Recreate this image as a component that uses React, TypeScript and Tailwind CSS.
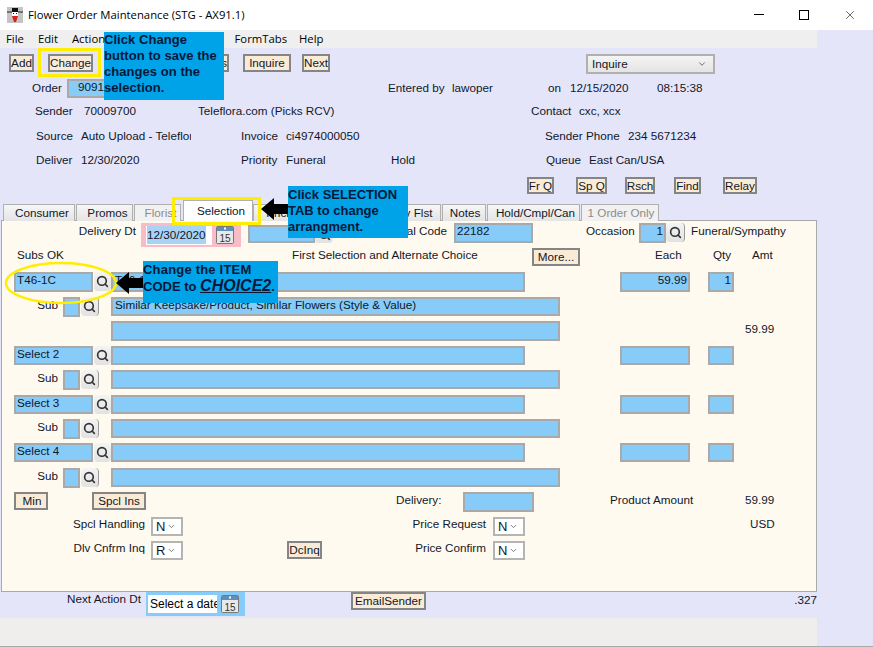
import { ReactNode } from "react";
import { ChevronDown, Search, X } from "lucide-react";

const Field = ({ className = "", children }: { className?: string; children?: ReactNode }) => (
  <div
    className={`shrink-0 overflow-hidden whitespace-nowrap border-2 border-[#a9a9a9] bg-[#87cbf9] px-px leading-[11px] ${className}`}
  >
    {children}
  </div>
);

const Btn = ({ className = "", children }: { className?: string; children: ReactNode }) => (
  <div
    className={`flex shrink-0 items-center justify-center whitespace-nowrap border-2 border-[#858585] bg-[#faebd7] leading-none ${className}`}
  >
    {children}
  </div>
);

const Lens = ({ className = "" }: { className?: string }) => (
  <div
    className={`flex shrink-0 items-center justify-center rounded-sm bg-gradient-to-b from-[#f4f4f4] to-[#e2e2e2] text-[#333] ${className}`}
  >
    <Search size={13} strokeWidth={3} />
  </div>
);

const Calendar = () => (
  <svg width="18" height="18" viewBox="0 0 18 18" className="shrink-0">
    <rect x="0.5" y="0.5" width="17" height="17" rx="1" fill="#e8e8e8" stroke="#777" />
    <rect x="1" y="1" width="16" height="4" fill="#5f8fb8" />
    <rect x="8" y="1.5" width="2" height="2" fill="#fff" />
    <text x="9" y="15.5" textAnchor="middle" fontSize="10" fill="#333" fontFamily="Liberation Sans">
      15
    </text>
  </svg>
);

const Drop = ({ children, className = "" }: { children: ReactNode; className?: string }) => (
  <div
    className={`flex h-[19px] w-[32px] shrink-0 items-center justify-between border-2 border-[#b4b4b4] bg-white pl-[3px] pr-[5px] text-[13px] ${className}`}
  >
    {children}
    <ChevronDown size={9} className="text-[#555]" />
  </div>
);

const Tab = ({ className = "", children }: { className?: string; children: ReactNode }) => (
  <div
    className={`flex h-[17px] shrink-0 items-center justify-center whitespace-nowrap border border-b-0 border-[#b0b0b0] ${className}`}
  >
    {children}
  </div>
);

const SubRow = ({ text, className }: { text?: string; className: string }) => (
  <div className={`flex items-start ${className}`}>
    <div className="w-[56px] shrink-0 text-right leading-[16px]">Sub</div>
    <Field className="ml-[5px] h-[20px] w-[17px]" />
    <Lens className="ml-px h-[19px] w-[18px] border-r border-[#999]" />
    <Field className="ml-[12px] h-[19px] w-[449px] pl-[2px]">{text}</Field>
  </div>
);

const SelectLine = ({ label, className }: { label: string; className: string }) => (
  <div className={`flex items-start ${className}`}>
    <Field className="ml-[12px] h-[19px] w-[79px]">{label}</Field>
    <Lens className="ml-px h-[19px] w-[17px]" />
    <Field className="h-[19px] w-[414px]" />
    <Field className="ml-[95px] h-[19px] w-[70px]" />
    <Field className="ml-[18px] h-[19px] w-[26px]" />
  </div>
);

export default function App() {
  return (
    <div className="relative h-[647px] w-[873px] overflow-hidden bg-[#e5e5fa] font-['Liberation_Sans',sans-serif] text-[11.7px] text-[#10182a]">
      {/* title bar */}
      <div className="flex h-[30px] items-center bg-white pl-[7px]">
        <svg width="16" height="16" viewBox="0 0 16 16" className="shrink-0">
          <rect width="16" height="16" fill="#c4c4c4" />
          <path d="M0 5h16" stroke="#222" strokeWidth="1" />
          <rect x="5" y="1" width="6" height="4" fill="#111" />
          <rect x="5" y="5" width="6" height="4" fill="#fff" />
          <rect x="6" y="6" width="1" height="1" fill="#111" />
          <rect x="9" y="6" width="1" height="1" fill="#111" />
          <path d="M5 9h6l-2 6H7z" fill="#d81e1e" />
        </svg>
        <span className="ml-[5px] font-['Open_Sans',sans-serif] text-[11.3px] text-black">
          Flower Order Maintenance (STG - AX91.1)
        </span>
        <div className="mb-[1px] ml-auto flex items-center text-black">
          <div className="h-px w-[10px] bg-black" />
          <div className="ml-[35px] h-[10px] w-[10px] border border-black" />
          <X size={14} strokeWidth={1} className="ml-[34px] mr-[16px]" />
        </div>
      </div>

      {/* menu */}
      <div className="flex h-[18px] w-[817px] items-center bg-[#efefef] pl-[6px] font-['Open_Sans',sans-serif] text-[11.3px] text-black">
        <span>File</span>
        <span className="ml-[14px]">Edit</span>
        <span className="ml-[14px]">Actions</span>
        <span className="ml-[124px]">FormTabs</span>
        <span className="ml-[12px]">Help</span>
      </div>

      <div className="w-[817px]">
        {/* toolbar */}
        <div className="flex h-[31px] items-start pt-[6px]">
          <Btn className="ml-[9px] h-[18px] w-[25px]">Add</Btn>
          <Btn className="ml-[14px] h-[18px] w-[45px]">Change</Btn>
          <Btn className="ml-[120px] h-[18px] w-[16px] justify-end">Ins</Btn>
          <Btn className="ml-[14px] h-[18px] w-[48px]">Inquire</Btn>
          <Btn className="ml-[11px] h-[18px] w-[28px]">Next</Btn>
          <div className="ml-[256px] flex h-[20px] w-[129px] shrink-0 items-center justify-between border-2 border-[#b0b0b0] bg-gradient-to-b from-[#f4f4f4] to-[#e4e4e4] pl-[4px] pr-[6px]">
            Inquire
            <ChevronDown size={10} className="text-[#555]" />
          </div>
        </div>

        {/* order header */}
        <div className="flex h-[20px] items-center pb-[3px]">
          <div className="w-[62px] text-right">Order</div>
          <Field className="ml-[5px] h-[19px] w-[60px] self-start pl-[9px]">90917000</Field>
          <div className="ml-[261px] w-[60px]">Entered by</div>
          <div className="ml-[4px] w-[96px]">lawoper</div>
          <div className="w-[22px]">on</div>
          <div className="w-[87px]">12/15/2020</div>
          <div>08:15:38</div>
        </div>
        <div className="flex h-[24px] items-center">
          <div className="ml-[35px] w-[49px]">Sender</div>
          <div className="w-[114px]">70009700</div>
          <div className="w-[333px]">Teleflora.com (Picks RCV)</div>
          <div className="w-[48px]">Contact</div>
          <div>cxc, xcx</div>
        </div>
        <div className="flex h-[25px] items-center">
          <div className="ml-[36px] w-[45px]">Source</div>
          <div className="w-[110px] overflow-hidden whitespace-nowrap">Auto Upload - Teleflora</div>
          <div className="ml-[50px] w-[45px]">Invoice</div>
          <div className="w-[259px]">ci4974000050</div>
          <div className="w-[83px]">Sender Phone</div>
          <div>234 5671234</div>
        </div>
        <div className="flex h-[24px] items-center">
          <div className="ml-[36px] w-[45px]">Deliver</div>
          <div className="w-[160px]">12/30/2020</div>
          <div className="w-[45px]">Priority</div>
          <div className="w-[105px]">Funeral</div>
          <div className="w-[155px]">Hold</div>
          <div className="w-[43px]">Queue</div>
          <div>East Can/USA</div>
        </div>

        {/* quick buttons */}
        <div className="flex h-[28px] items-start pt-[5px]">
          <Btn className="ml-[527px] h-[17px] w-[27px]">Fr Q</Btn>
          <Btn className="ml-[22px] h-[17px] w-[31px]">Sp Q</Btn>
          <Btn className="ml-[18px] h-[17px] w-[30px]">Rsch</Btn>
          <Btn className="ml-[19px] h-[17px] w-[27px]">Find</Btn>
          <Btn className="ml-[22px] h-[17px] w-[34px]">Relay</Btn>
        </div>

        {/* tabs */}
        <div className="relative z-10 flex h-[21px] items-end pl-[3px]">
          <Tab className="w-[72px] bg-gradient-to-b from-[#f6f6f6] to-[#e4e4e4] pl-[6px]">Consumer</Tab>
          <Tab className="ml-px w-[57px] bg-gradient-to-b from-[#f6f6f6] to-[#e4e4e4] pl-[6px]">Promos</Tab>
          <Tab className="ml-px w-[47px] bg-[#f1f1f1] pl-[6px] text-[#8c8c8c]">Florist</Tab>
          <div className="ml-[2px] flex h-[21px] w-[70px] items-center justify-center border border-b-0 border-[#b0b0b0] bg-white pl-[6px]">
            Selection
          </div>
          <Tab className="w-[62px] bg-gradient-to-b from-[#f6f6f6] to-[#e4e4e4]">Pricing</Tab>
          <Tab className="w-[70px] bg-gradient-to-b from-[#f6f6f6] to-[#e4e4e4]">Codes</Tab>
          <Tab className="w-[56px] bg-gradient-to-b from-[#f6f6f6] to-[#e4e4e4]">Dlv Flst</Tab>
          <Tab className="ml-px w-[44px] bg-gradient-to-b from-[#f6f6f6] to-[#e4e4e4] pl-[2px]">Notes</Tab>
          <Tab className="ml-px w-[93px] bg-gradient-to-b from-[#f6f6f6] to-[#e4e4e4] pl-[4px]">Hold/Cmpl/Can</Tab>
          <Tab className="ml-px w-[78px] bg-[#f1f1f1] pl-[2px] text-[#8c8c8c]">1 Order Only</Tab>
        </div>

        {/* selection panel */}
        <div className="ml-px -mt-px h-[372px] w-[816px] border border-[#a9a9a9] bg-[#fffaf0] pt-[2px]">
          <div className="flex h-[25px] items-start">
            <div className="mt-px w-[134px] shrink-0 text-right leading-[14px]">Delivery Dt</div>
            <div className="ml-[5px] flex h-[24px] w-[100px] shrink-0 items-center bg-[#f7bcc7] pl-[5px]">
              <div className="flex h-[19px] w-[66px] items-center bg-white pl-[1px]">
                <span className="bg-[#a9d3f5]">12/30/2020</span>
              </div>
              <div className="ml-[4px]">
                <Calendar />
              </div>
            </div>
            <Field className="ml-[7px] mt-[2px] h-[18px] w-[67px]" />
            <Lens className="mt-[2px] h-[18px] w-[18px]" />
            <div className="mt-px w-[114px] shrink-0 text-right leading-[14px]">Postal Code</div>
            <Field className="ml-[7px] h-[20px] w-[79px]">22182</Field>
            <div className="ml-[53px] mt-px w-[47px] shrink-0 whitespace-nowrap leading-[14px]">Occasion</div>
            <Field className="ml-[6px] h-[20px] w-[27px] text-right">1</Field>
            <Lens className="h-[19px] w-[19px] border-r border-[#999]" />
            <div className="ml-[6px] mt-px leading-[14px]">Funeral/Sympathy</div>
          </div>

          <div className="flex h-[24px] items-start">
            <div className="ml-[15px] w-[275px] shrink-0 leading-[14px]">Subs OK</div>
            <div className="w-[240px] shrink-0 leading-[14px]">First Selection and Alternate Choice</div>
            <Btn className="h-[18px] w-[48px]">More...</Btn>
            <div className="ml-[75px] w-[58px] shrink-0 leading-[14px]">Each</div>
            <div className="w-[39px] shrink-0 leading-[14px]">Qty</div>
            <div className="leading-[14px]">Amt</div>
          </div>

          <div className="flex h-[25px] items-start">
            <Field className="ml-[12px] h-[20px] w-[79px]">T46-1C</Field>
            <Lens className="ml-px h-[19px] w-[17px]" />
            <Field className="h-[20px] w-[414px] pl-[2px]">T46-1C Florist Choice</Field>
            <Field className="ml-[95px] h-[20px] w-[70px] text-right">59.99</Field>
            <Field className="ml-[18px] h-[20px] w-[26px] text-right">1</Field>
          </div>
          <SubRow className="h-[24px]" text="Similar Keepsake/Product, Similar Flowers (Style & Value)" />
          <div className="flex h-[25px] items-start">
            <Field className="ml-[109px] h-[20px] w-[449px]" />
            <div className="ml-[185px] mt-px leading-[14px]">59.99</div>
          </div>

          <SelectLine className="h-[24px]" label="Select 2" />
          <SubRow className="h-[25px]" />
          <SelectLine className="h-[24px]" label="Select 3" />
          <SubRow className="h-[24px]" />
          <SelectLine className="h-[25px]" label="Select 4" />
          <SubRow className="h-[24px]" />

          <div className="flex h-[25px] items-start">
            <Btn className="ml-[12px] h-[18px] w-[34px] pl-[2px]">Min</Btn>
            <Btn className="ml-[44px] h-[18px] w-[54px]">Spcl Ins</Btn>
            <div className="ml-[250px] mt-[1px] w-[67px] shrink-0 leading-[14px]">Delivery:</div>
            <Field className="h-[20px] w-[71px]" />
            <div className="ml-[76px] mt-[1px] w-[135px] shrink-0 leading-[14px]">Product Amount</div>
            <div className="mt-[1px] leading-[14px]">59.99</div>
          </div>
          <div className="flex h-[24px] items-start">
            <div className="w-[143px] shrink-0 text-right leading-[14px]">Spcl Handling</div>
            <Drop className="ml-[6px]">N</Drop>
            <div className="w-[303px] shrink-0 text-right leading-[14px]">Price Request</div>
            <Drop className="ml-[7px]">N</Drop>
            <div className="ml-[225px] leading-[14px]">USD</div>
          </div>
          <div className="flex h-[24px] items-start">
            <div className="w-[143px] shrink-0 text-right leading-[14px]">Dlv Cnfrm Inq</div>
            <Drop className="ml-[6px]">R</Drop>
            <Btn className="ml-[104px] h-[18px] w-[35px]">DcInq</Btn>
            <div className="w-[164px] shrink-0 text-right leading-[14px]">Price Confirm</div>
            <Drop className="ml-[7px]">N</Drop>
          </div>
        </div>

        {/* next action */}
        <div className="flex h-[26px] items-start">
          <div className="ml-[67px] w-[79px] shrink-0 whitespace-nowrap leading-[14px]">Next Action Dt</div>
          <div className="flex h-[24px] w-[99px] shrink-0 items-center bg-[#87cbf9] pl-[2px]">
            <div className="flex h-[18px] w-[69px] items-center overflow-hidden whitespace-nowrap bg-white pl-[2px] text-[12px] text-black">
              Select a date
            </div>
            <div className="ml-[4px]">
              <Calendar />
            </div>
          </div>
          <Btn className="ml-[106px] h-[18px] w-[75px]">EmailSender</Btn>
          <div className="ml-auto mt-[1px] leading-[14px]">.327</div>
        </div>

        {/* status bar */}
        <div className="h-[28px] bg-[#f0eded]" />
      </div>
      <div className="h-px bg-[#a9a9a9]" />

      {/* tutorial annotations */}
      <div className="absolute left-[38px] top-[48px] z-20 h-[29px] w-[63px] border-[3px] border-[#ffee00]" />
      <div className="absolute left-[172px] top-[197px] z-20 h-[28px] w-[89px] border-[3px] border-[#ffee00]" />
      <svg className="absolute left-[3px] top-[260px] z-20" width="116" height="46" viewBox="0 0 116 46">
        <ellipse cx="58" cy="23" rx="55" ry="20" fill="none" stroke="#ffee00" strokeWidth="2.5" />
      </svg>
      <div className="absolute left-[104px] top-[32px] z-30 h-[68px] w-[120px] bg-[#00a2e8] text-[13px] font-bold leading-[16px] tracking-[0.05px] text-[#06183a]">
        Click Change button to save the changes on the selection.
      </div>
      <div className="absolute left-[288px] top-[186px] z-30 h-[52px] w-[120px] bg-[#00a2e8] pt-[1px] text-[13px] font-bold leading-[16px] text-[#06183a]">
        Click SELECTION TAB to change arrangment.
      </div>
      <div className="absolute left-[143px] top-[261px] z-30 h-[42px] w-[135px] bg-[#00a2e8] pt-[1px] text-[13px] font-bold leading-[16px] text-[#06183a]">
        <span className="tracking-[0.2px]">Change the ITEM</span>
        <br />
        CODE to{" "}
        <span className="text-[16px] italic underline">CHOICE2</span>.
      </div>
      <svg className="absolute left-[261px] top-[198px] z-30" width="27" height="22" viewBox="0 0 27 22">
        <path d="M0 11 13 0v6h14v10H13v6z" fill="#000" />
      </svg>
      <svg className="absolute left-[116px] top-[272px] z-30" width="27" height="22" viewBox="0 0 27 22">
        <path d="M0 11 13 0v6h14v10H13v6z" fill="#000" />
      </svg>
    </div>
  );
}
